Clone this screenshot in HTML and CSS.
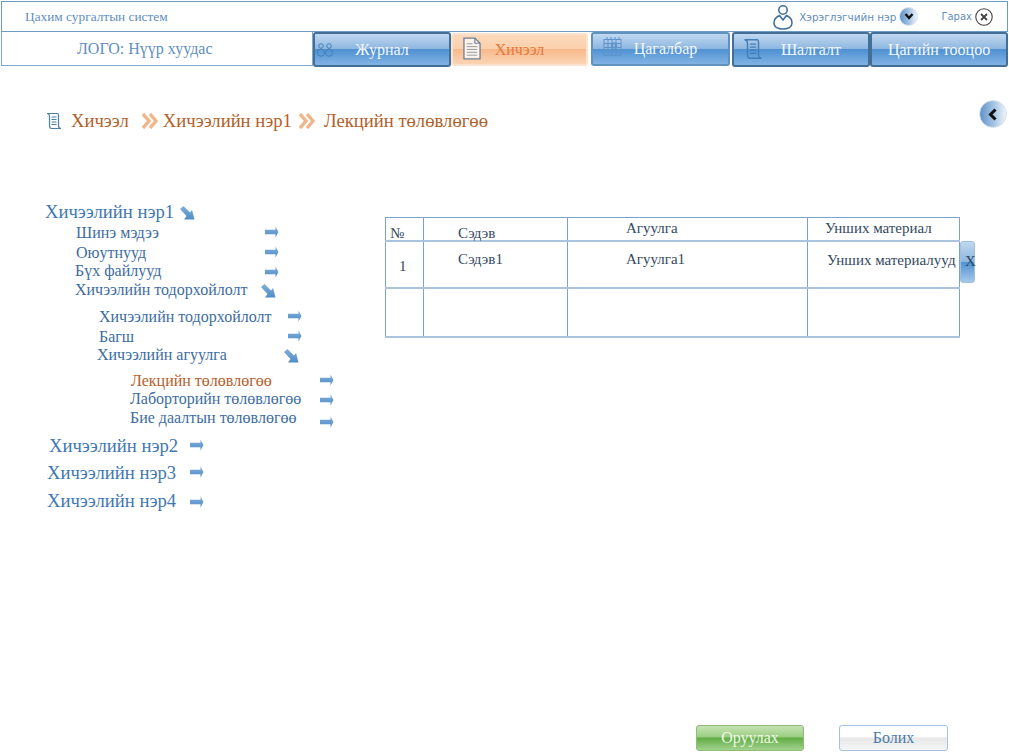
FILE: index.html
```html
<!DOCTYPE html>
<html lang="mn">
  <head>
    <meta charset="UTF-8" />
    <meta name="viewport" content="width=device-width, initial-scale=1.0" />
    <title>Цахим сургалтын систем</title>
    <link rel="stylesheet" href="styles.css">
  </head>
  <body>
    <svg class="defs" width="0" height="0" aria-hidden="true">
      <defs>
        <linearGradient id="arrowFill" x1="0" y1="0" x2="0" y2="1">
          <stop offset="0" stop-color="#82afdc" />
          <stop offset="1" stop-color="#4f8cc6" />
        </linearGradient>
        <symbol id="arrowRight" viewBox="0 0 14 12">
          <path d="M0 3.800H10.500V0.500L13.500 6L10.500 11.500V8.200H0Z" fill="url(#arrowFill)" />
        </symbol>
        <symbol id="arrowDown" viewBox="0 0 15 14">
          <path d="M0 3L3.500 0L10 6.500L12 4L14.500 13.500L4 13.500L6.500 10Z" fill="url(#arrowFill)" />
        </symbol>
        <symbol id="scroll" viewBox="0 0 16 18">
          <path d="M1 1.500H11.500C12.500 1.500 12.500 3 12.500 4V13.500C12.500 15 13.500 16.500 15 16.500H5.500C4 16.500 3.500 15 3.500 13.500V5C3.500 3.500 3 1.500 1 1.500Z" fill="none" stroke="currentColor" stroke-width="1.2" />
          <path d="M5.500 5H10.500M5.500 7.500H10.500M5.500 10H10.500M5.500 12.500H10.500" stroke="currentColor" stroke-width="1" />
        </symbol>
        <symbol id="chevrons" viewBox="0 0 16 16">
          <path d="M1 1L7 8L1 15M8 1L14 8L8 15" fill="none" stroke="#f0b58a" stroke-width="3.4" />
        </symbol>
      </defs>
    </svg>

    <header class="topbar">
      <span class="system-name">Цахим сургалтын систем</span>
      <div class="user-box">
        <svg class="user-icon" viewBox="0 0 20 26">
          <circle cx="10" cy="6" r="4.200" />
          <path d="M6.500 11.500C3 13 1 16 1 19C1 23 5 25 10 25C15 25 19 23 19 19C19 16 17 13 13.500 11.500L10 16Z" />
        </svg>
        <span class="user-name">Хэрэглэгчийн нэр</span>
        <span class="round-btn">
          <svg viewBox="0 0 10 8"><path d="M1.500 1.500L5 5.500L8.500 1.500" /></svg>
        </span>
        <span class="logout">Гарах</span>
        <svg class="close-icon" viewBox="0 0 18 18">
          <circle cx="9" cy="9" r="8.200" />
          <path d="M6 6L12 12M12 6L6 12" />
        </svg>
      </div>
    </header>

    <nav class="navbar">
      <a class="logo">ЛОГО: Нүүр хуудас</a>
      <a class="tab tab-dark tab-journal">
        <svg class="tab-icon" viewBox="0 0 20 18">
          <g fill="none" stroke="currentColor" stroke-width="1.100">
            <circle cx="5.500" cy="4.500" r="2.600" /><circle cx="5.500" cy="12" r="4" />
            <circle cx="14.500" cy="4.500" r="2.600" /><circle cx="14.500" cy="12" r="4" />
          </g>
        </svg>
        <span>Журнал</span>
      </a>
      <a class="tab tab-active">
        <svg class="tab-icon doc-icon" viewBox="0 0 19 24">
          <path d="M1 1H12.500L18 6.500V23H1Z" fill="#fdf3ea" stroke="#6f8198" stroke-width="1.400" />
          <path d="M12.500 1V6.500H18" fill="none" stroke="#6f8198" stroke-width="1.200" />
          <path d="M4 7H10M4 10H15M4 13H15M4 16H15M4 19H15" stroke="#8d97a3" stroke-width="1" />
        </svg>
        <span>Хичээл</span>
      </a>
      <a class="tab tab-light">
        <svg class="tab-icon" viewBox="0 0 19 19">
          <g fill="none" stroke="currentColor" stroke-width="1">
            <rect x="1" y="2.500" width="17" height="16" />
            <path d="M1 6.500H18M1 10.500H18M1 14.500H18M5 2.500V18.500M9 2.500V18.500M13 2.500V18.500M4 0V3M8 0V3M12 0V3M16 0V3" />
            <rect x="9" y="6.500" width="4" height="4" stroke-width="2" />
          </g>
        </svg>
        <span>Цагалбар</span>
      </a>
      <a class="tab tab-dark tab-exam">
        <svg class="tab-icon scroll-icon"><use href="#scroll" /></svg>
        <span>Шалгалт</span>
      </a>
      <a class="tab tab-dark"><span>Цагийн тооцоо</span></a>
    </nav>

    <div class="crumbs">
      <svg class="crumb-icon"><use href="#scroll" /></svg>
      <span class="crumb crumb-first">Хичээл</span>
      <svg class="crumb-sep"><use href="#chevrons" /></svg>
      <span class="crumb">Хичээлийн нэр1</span>
      <svg class="crumb-sep crumb-sep-near"><use href="#chevrons" /></svg>
      <span class="crumb crumb-last">Лекцийн төлөвлөгөө</span>
    </div>

    <span class="round-btn back-btn">
      <svg viewBox="0 0 8 10"><path d="M6 1L2 5L6 9" /></svg>
    </span>

    <main class="content">
      <ul class="tree">
        <li class="lv0 first"><span>Хичээлийн нэр1</span><svg class="down down-first"><use href="#arrowDown" /></svg></li>
        <li class="lv1"><span>Шинэ мэдээ</span><svg class="right"><use href="#arrowRight" /></svg></li>
        <li class="lv1"><span>Оюутнууд</span><svg class="right"><use href="#arrowRight" /></svg></li>
        <li class="lv1 out"><span>Бүх файлууд</span><svg class="right low"><use href="#arrowRight" /></svg></li>
        <li class="lv1 out"><span>Хичээлийн тодорхойлолт</span><svg class="down"><use href="#arrowDown" /></svg></li>
        <li class="lv2"><span>Хичээлийн тодорхойлолт</span><svg class="right"><use href="#arrowRight" /></svg></li>
        <li class="lv2"><span>Багш</span><svg class="right"><use href="#arrowRight" /></svg></li>
        <li class="lv2 out"><span>Хичээлийн агуулга</span><svg class="down"><use href="#arrowDown" /></svg></li>
        <li class="lv3 current"><span>Лекцийн төлөвлөгөө</span><svg class="right"><use href="#arrowRight" /></svg></li>
        <li class="lv3"><span>Лаборторийн төлөвлөгөө</span><svg class="right low"><use href="#arrowRight" /></svg></li>
        <li class="lv3"><span>Бие даалтын төлөвлөгөө</span><svg class="right lower"><use href="#arrowRight" /></svg></li>
        <li class="lv0 second"><span>Хичээлийн нэр2</span><svg class="right"><use href="#arrowRight" /></svg></li>
        <li class="lv0"><span>Хичээлийн нэр3</span><svg class="right"><use href="#arrowRight" /></svg></li>
        <li class="lv0"><span>Хичээлийн нэр4</span><svg class="right low"><use href="#arrowRight" /></svg></li>
      </ul>

      <div class="table-wrap">
        <table class="grid">
          <colgroup>
            <col class="col-no" /><col class="col-topic" /><col class="col-body" /><col class="col-read" />
          </colgroup>
          <tr class="head">
            <td class="cell-no"><span class="drop">№</span></td>
            <td class="cell-topic"><span class="drop">Сэдэв</span></td>
            <td class="cell-body">Агуулга</td>
            <td class="cell-head-read">Унших материал</td>
          </tr>
          <tr class="row-filled">
            <td class="cell-one">1</td>
            <td class="cell-topic">Сэдэв1</td>
            <td class="cell-body">Агуулга1</td>
            <td class="cell-read">Унших материалууд</td>
          </tr>
          <tr class="row-empty"><td></td><td></td><td></td><td></td></tr>
        </table>
        <a class="delete-btn">X</a>
      </div>
    </main>

    <footer class="actions">
      <a class="btn btn-green">Оруулах</a>
      <a class="btn btn-plain">Болих</a>
    </footer>
  </body>
</html>
```

FILE: styles.css
```css
body {
  margin: 0;
  height: 755px;
  overflow: hidden;
  position: relative;
  display: flex;
  flex-direction: column;
  background-color: #fff;
  font-family: "Liberation Serif", "Noto Serif", serif;
  color: #3d6d9f;
}
.defs {
  position: absolute;
}

/* top bar */
.topbar {
  height: 29px;
  margin: 1px 1px 0 1px;
  padding: 0 14px 0 23px;
  display: flex;
  align-items: center;
  justify-content: space-between;
  border: 1px solid #6d9cbf;
}
.system-name {
  font-size: 13.33px;
  color: #5f8fc0;
}
.user-box {
  display: flex;
  align-items: center;
}
.user-icon {
  width: 20px;
  height: 26px;
  margin-right: 6px;
  fill: none;
  stroke: #3f719f;
  stroke-width: 1.6;
}
.user-name, .logout {
  font-family: "DejaVu Sans", sans-serif;
  font-size: 10.4px;
  color: #5f8fc0;
}
.user-box .round-btn {
  width: 19px;
  height: 19px;
  margin-left: 3px;
}
.logout {
  font-size: 10px;
  margin-left: 23px;
}
.close-icon {
  width: 18px;
  height: 18px;
  margin-left: 3px;
  fill: none;
  stroke: #444;
  stroke-width: 1.1;
}
.close-icon path {
  stroke-width: 1.8;
}
.round-btn {
  display: flex;
  align-items: center;
  justify-content: center;
  box-sizing: border-box;
  border-radius: 50%;
  border: 1px solid #d5e2ee;
  background: linear-gradient(90deg, #5f93c9 0%, #a8c6e4 55%, #eef4fa 100%);
}
.round-btn svg {
  width: 10px;
  height: 9px;
  fill: none;
  stroke: #111;
  stroke-width: 2.4;
}

/* navigation */
.navbar {
  height: 35px;
  display: flex;
  margin-left: 1px;
}
.logo {
  width: 235px;
  height: 33px;
  padding-left: 75px;
  border: 1px solid #7fa9cc;
  border-top: 0;
  line-height: 33px;
  font-size: 16px;
  color: #5f8fc0;
}
.tab {
  position: relative;
  box-sizing: border-box;
  width: 138px;
  height: 35px;
  display: flex;
  align-items: center;
  justify-content: center;
  border-radius: 3px;
  font-size: 16px;
  color: #f3f8fd;
  background: linear-gradient(#c0d8f0 0%, #8db6e0 49%, #4f91d2 50%, #82b3e4 100%);
}
.tab-dark {
  border: 2px solid #436f96;
}
.tab-light {
  border: 2px solid #5f93bd;
  width: 139px;
  height: 34px;
  margin: 0 2px 0 3px;
  padding-left: 10px;
}
.tab-active {
  width: 137px;
  height: 33px;
  margin-top: 1px;
  border: 2px solid #fbe3cf;
  background: linear-gradient(#fcd9bb 0%, #fbd0ac 49%, #f8b98a 50%, #fbd5b6 100%);
  color: #e8773a;
}
.tab-exam {
  padding-left: 20px;
}
.tab-icon {
  position: absolute;
  color: #3f7fb8;
}
.tab-journal .tab-icon {
  left: 1px;
  top: 8px;
  width: 18px;
  height: 16px;
}
.doc-icon {
  left: 10px;
  top: 2px;
  width: 18px;
  height: 23px;
}
.tab-light .tab-icon {
  left: 10px;
  top: 3px;
  width: 19px;
  height: 19px;
  color: #5f93c9;
}
.scroll-icon {
  left: 9px;
  top: 4px;
  width: 20px;
  height: 22px;
}

/* breadcrumb */
.crumbs {
  display: flex;
  align-items: center;
  height: 24px;
  margin-top: 42px;
  padding-left: 46px;
  font-size: 18.67px;
  color: #b4602a;
}
.crumb-icon {
  width: 16px;
  height: 18px;
  color: #4d7fa8;
}
.crumb-first {
  margin-left: 9px;
}
.crumb-sep {
  width: 16px;
  height: 16px;
  margin: 0 5px 0 13px;
}
.crumb-sep-near {
  margin-left: 7px;
}
.crumb-last {
  margin-left: 4px;
}
.back-btn {
  position: absolute;
  left: 979px;
  top: 100px;
  width: 28px;
  height: 28px;
}
.back-btn svg {
  width: 10px;
  height: 13px;
}

/* tree */
.content {
  position: relative;
  display: flex;
  margin-top: 70px;
}
.tree {
  list-style: none;
  margin: 0;
  padding: 0;
  width: 385px;
  display: grid;
  grid-template-rows: 21px 20px 18px 19px 27px 20px 18px 26px 18px 19px 28px 27px 28px 18px;
  line-height: 18px;
  font-size: 16px;
}
.tree li {
  display: flex;
  align-items: flex-start;
  padding-left: var(--x);
  white-space: nowrap;
}
.tree span {
  flex: none;
  width: calc(var(--arrow) - var(--x));
}
.lv0 {
  --x: 47px;
  --arrow: 190px;
  font-size: 18.67px;
  color: #3f78b0;
}
.lv0.first {
  --x: 45px;
}
.lv0.second {
  --x: 49px;
}
.lv1 {
  --x: 76px;
  --arrow: 265px;
}
.lv2 {
  --x: 99px;
  --arrow: 288px;
}
.lv3 {
  --x: 130px;
  --arrow: 320px;
}
.lv1.out {
  --x: 75px;
}
.lv2.out {
  --x: 97px;
}
.lv3.current {
  --x: 131px;
  color: #b4602a;
}
.right {
  flex: none;
  width: 14px;
  height: 12px;
  margin-top: 2px;
}
.right.low {
  margin-top: 4px;
}
.right.lower {
  margin-top: 7px;
}
.down {
  flex: none;
  width: 15px;
  height: 14px;
  margin: 3px 0 0 -4px;
}
.down-first {
  margin: 3px 0 0 -10px;
}

/* table */
.table-wrap {
  position: relative;
  margin-top: 14px;
  align-self: flex-start;
}
.grid {
  border-collapse: collapse;
  table-layout: fixed;
  width: 575px;
  font-size: 15px;
  line-height: 15px;
  color: #34495f;
}
.col-no {
  width: 38px;
}
.col-topic {
  width: 144px;
}
.col-body {
  width: 240px;
}
.grid td {
  padding: 0;
  border: 1px solid #7ba3c9;
  vertical-align: top;
  white-space: nowrap;
  box-sizing: border-box;
}
.head td {
  height: 23px;
  border-bottom: 2px solid #a9c4de;
  padding-top: 3px;
}
.row-filled td {
  height: 47px;
  border-bottom: 2px solid #a9c4de;
  padding-top: 10px;
}
.row-empty td {
  height: 49px;
  border-bottom: 2px solid #a9c4de;
}
.drop {
  display: block;
  padding-top: 5px;
  margin-bottom: -4px;
}
.grid .cell-no {
  padding-left: 4px;
}
.grid .cell-one {
  padding: 17px 0 0 13px;
}
.grid .cell-topic {
  padding-left: 34px;
}
.grid .cell-body {
  padding-left: 58px;
}
.grid .cell-head-read {
  padding-left: 17px;
}
.grid .cell-read {
  padding-left: 19px;
  padding-top: 11px;
}
.delete-btn {
  position: absolute;
  left: 575px;
  top: 24px;
  width: 15px;
  height: 42px;
  box-sizing: border-box;
  padding-left: 4px;
  border: 1px solid #9fbfdc;
  border-radius: 3px;
  background: linear-gradient(#c0d8f0 0%, #8db6e0 49%, #4f91d2 50%, #a5c8ea 100%);
  line-height: 38px;
  font-size: 15px;
  color: #2f4a66;
}

/* bottom buttons */
.actions {
  margin-top: auto;
  padding: 0 61px 4px 0;
  display: flex;
  justify-content: flex-end;
  gap: 35px;
}
.btn {
  box-sizing: border-box;
  width: 108px;
  height: 26px;
  border-radius: 3px;
  text-align: center;
  line-height: 24px;
  font-size: 16px;
}
.btn-green {
  border: 1px solid #8dbb78;
  color: #eef7e8;
  background: linear-gradient(#c5e2b4 0%, #9bcf82 45%, #62ad45 50%, #a0d28c 100%);
}
.btn-plain {
  width: 109px;
  border: 1px solid #a4c2dc;
  color: #4d7aa8;
  background: linear-gradient(#fff 0%, #fff 45%, #e8e8e8 50%, #f5f5f5 100%);
}
```
